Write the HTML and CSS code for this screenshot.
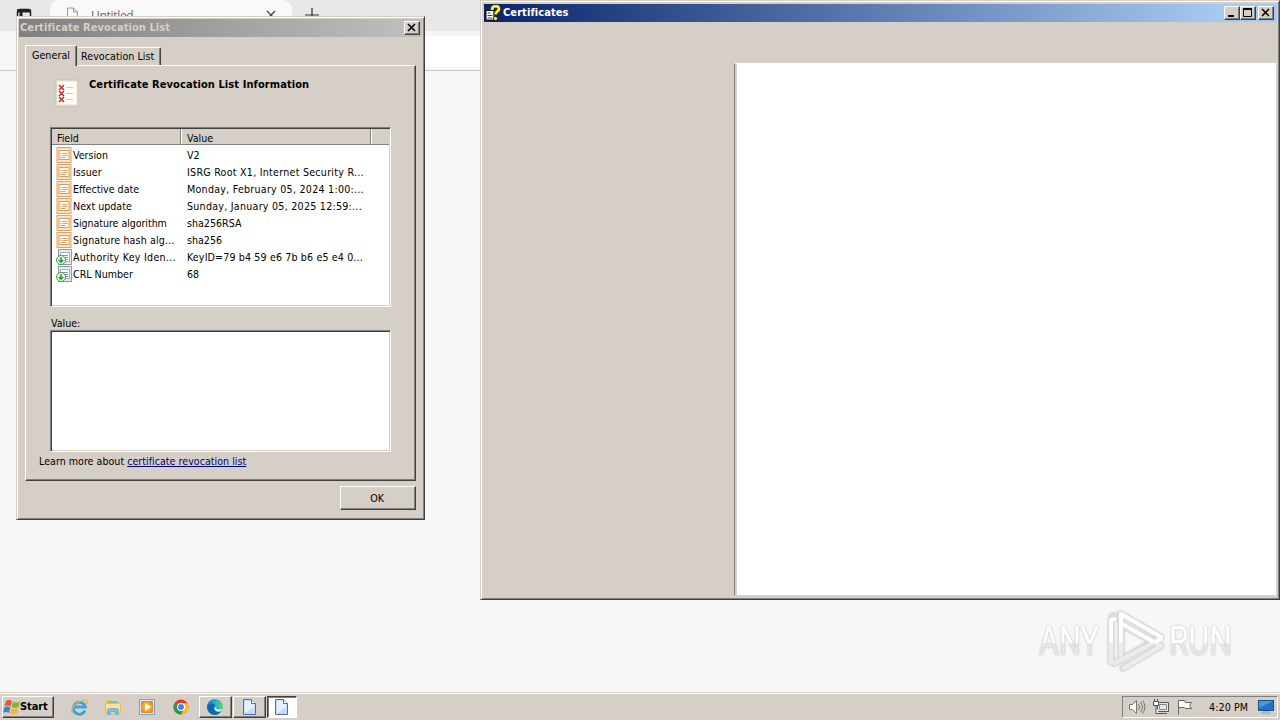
FILE: index.html
```html
<!DOCTYPE html>
<html lang="en">
<head>
<meta charset="utf-8">
<title>Desktop</title>
<link rel="stylesheet" href="styles.css">
</head>
<body>
<svg class="defs" width="0" height="0">
  <symbol id="field" viewBox="0 0 15 16"><rect x=".5" y=".5" width="14" height="15" fill="#fbe3c4" stroke="#dfa266"/><rect x="2.500" y="3.500" width="10" height="9" fill="#fffaf0" stroke="#dc9c58"/><path d="M4 6.500h1M6 6.500h5M4 8.500h1M6 8.500h5M4 10.500h5" stroke="#dda066"/></symbol>
  <symbol id="ext" viewBox="0 0 16 16"><rect x="2.500" y=".5" width="13" height="15" fill="#e4eaf0" stroke="#8a9bb0"/><rect x="4.500" y="3.500" width="9" height="9" fill="#fff" stroke="#a5b1c4"/><path d="M6 6.500h6M8 8.500h4M10 10.500h2" stroke="#8a9bb8"/><circle cx="5" cy="11" r="4.500" fill="#eaffea" stroke="#559055"/><path d="M5 8v5M2.700 11l2.300 2.300L7.300 11" fill="none" stroke="#299b29" stroke-width="1.500"/></symbol>
  <symbol id="doc" viewBox="0 0 16 16"><path d="M2.500.5h8l4 4v11h-12z" fill="#c6dafa" stroke="#53709c"/><path d="M4 2h6v3h3v3L4 14z" fill="#e6f0ff"/><path d="M10.500.5v4h4" fill="#fff" stroke="#53709c"/></symbol>
</svg>
<div class="desktop">
  <div class="browser">
    <div class="tabstrip">
      <svg class="strip-icon" width="16" height="16"><rect x="1.500" y="1.500" width="13" height="13" rx="2" fill="none" stroke="#222" stroke-width="1.500"/><path d="M1 3h14M5 3v11" stroke="#222" stroke-width="3"/></svg>
      <div class="btab">
        <svg width="14" height="16" fill="none" stroke="#999"><path d="M1.500 1h6l4 4v10h-10zM7.500 1v4h4"/></svg>
        <span class="btitle">Untitled</span>
        <svg width="10" height="10" stroke="#444" stroke-width="1.300"><path d="M1 1l8 8M9 1L1 9"/></svg>
      </div>
      <svg class="plus" width="16" height="16" stroke="#333" stroke-width="1.200"><path d="M8 1v14M1 8h14"/></svg>
    </div>
    <div class="toolbar"><div class="address"></div></div>
  </div>

  <section class="window dialog">
    <header class="titlebar inactive"><span class="t-title">Certificate Revocation List</span>
      <span class="wbtn"><svg width="12" height="10"><path d="M2 1l7 7M9 1L2 8" stroke="#000" stroke-width="1.600"/></svg></span></header>
    <nav class="tabs"><span class="tab on">General</span><span class="tab">Revocation List</span></nav>
    <div class="page">
      <div class="heading">
        <svg width="24" height="28"><rect x="1" y="1" width="22" height="26" fill="#f3ecdf" stroke="#cdbfae"/><rect x="3" y="3" width="18" height="22" fill="#fffdfa"/><path d="M4 6l5 5M9 6l-5 5M4 12l5 5M9 12l-5 5M4 18l5 5M9 18l-5 5" stroke="#d62333" stroke-width="1.500"/><path d="M11 8.500h7M11 14.500h7M11 20.500h7" stroke="#c4ccd0"/></svg>
        <b class="t-head">Certificate Revocation List Information</b>
      </div>
      <div class="list">
        <div class="lhead"><span>Field</span><span>Value</span><span></span></div>
        <div class="row"><svg><use href="#field"/></svg><span class="k">Version</span><span class="v">V2</span></div>
        <div class="row"><svg><use href="#field"/></svg><span class="k">Issuer</span><span class="v wide">ISRG Root X1, Internet Security R...</span></div>
        <div class="row"><svg><use href="#field"/></svg><span class="k">Effective date</span><span class="v wide">Monday, February 05, 2024 1:00:...</span></div>
        <div class="row"><svg><use href="#field"/></svg><span class="k">Next update</span><span class="v wide">Sunday, January 05, 2025 12:59:...</span></div>
        <div class="row"><svg><use href="#field"/></svg><span class="k snug">Signature algorithm</span><span class="v">sha256RSA</span></div>
        <div class="row"><svg><use href="#field"/></svg><span class="k semi">Signature hash alg...</span><span class="v">sha256</span></div>
        <div class="row"><svg><use href="#ext"/></svg><span class="k wide">Authority Key Iden...</span><span class="v semi">KeyID=79 b4 59 e6 7b b6 e5 e4 0...</span></div>
        <div class="row"><svg><use href="#ext"/></svg><span class="k">CRL Number</span><span class="v">68</span></div>
      </div>
      <div class="vlabel">Value:</div>
      <div class="vbox"></div>
      <div class="learn">Learn more about <a>certificate revocation list</a></div>
    </div>
    <div class="actions"><span class="ok">OK</span></div>
  </section>

  <section class="window certs">
    <header class="titlebar active">
      <svg width="16" height="16"><path d="M1 5.500h8v9.500H1z" fill="#fff" stroke="#111"/><path d="M2.500 8h3M2.500 10.500h5M2.500 13h5" stroke="#444"/><path d="M7 5c0-5 7-5 7-1 0 3-3.500 2-3.500 5.500" fill="none" stroke="#111" stroke-width="4.500"/><circle cx="10.500" cy="13.500" r="2.300" fill="#111"/><path d="M7 5c0-5 7-5 7-1 0 3-3.500 2-3.500 5.500" fill="none" stroke="#ffed20" stroke-width="3"/><circle cx="10.500" cy="13.500" r="1.700" fill="#ffed20"/></svg>
      <span class="t-certs">Certificates</span>
      <span class="wbtn"><svg width="12" height="10"><path d="M2 8h6" stroke="#000" stroke-width="2"/></svg></span>
      <span class="wbtn"><svg width="12" height="10"><path d="M1.500 1v7.500h8V1M1 1h9" stroke="#000" fill="none"/><path d="M1 1h9" stroke="#000" stroke-width="2"/></svg></span>
      <span class="wbtn gap"><svg width="12" height="10"><path d="M2 1l7 7M9 1L2 8" stroke="#000" stroke-width="1.600"/></svg></span>
    </header>
    <div class="content"></div>
  </section>

  <svg class="watermark" width="220" height="80" viewBox="0 0 220 80">
    <defs>
      <linearGradient id="wm" x1="0" y1="0" x2="0" y2="1"><stop offset=".54" stop-color="#fff"/><stop offset=".56" stop-color="#e6e6e6"/></linearGradient>
      <linearGradient id="wl" gradientUnits="userSpaceOnUse" x1="0" y1="5" x2="0" y2="68"><stop offset=".5" stop-color="#fff"/><stop offset=".54" stop-color="#ececec"/></linearGradient>
    </defs>
    <g fill="none" stroke-linejoin="round" stroke-linecap="round">
      <path id="mark" d="M86 11H82M91 50V9l40 23M81 15v42l4 1 46-26M91 19l40 22M93 63l38-22" stroke="#dcdcdc" stroke-width="6"/>
      <path d="M85 14L81 15v42l4 1 46-24M91 50V9l40 23M92 19l39 22M94 63l37-22" stroke="url(#wl)" stroke-width="4"/>
    </g>
    <g class="wmtext" fill="url(#wm)"><text x="9" y="50" textLength="60" lengthAdjust="spacingAndGlyphs">ANY</text><text x="139" y="50" textLength="63" lengthAdjust="spacingAndGlyphs">RUN</text></g>
  </svg>

  <footer class="taskbar">
    <span class="start"><svg width="18" height="18"><path d="M3 3q3-2 6 0L7.500 8.500q-3-2-6 0z" fill="#e9572b"/><path d="M10 3.500q3 2 7 0L15.500 9q-4 2-7 0z" fill="#80b742"/><path d="M1.300 9.500q3-2 6 0L6 15q-3-2-6 0z" fill="#3c83ce"/><path d="M8.300 10q3 2 7 0L14 15.500q-4 2-7 0z" fill="#f5b827"/></svg><b>Start</b></span>
    <span class="quick">
      <svg width="18" height="18"><path d="M15 12.500A6 6 0 1 1 15.300 9H5" fill="none" stroke="#35a5df" stroke-width="2.800"/><path d="M2 15C-1 11 10 1 16 2c2 1 1 3 0 4" fill="none" stroke="#e9b83d" stroke-width="1.300"/></svg>
      <svg width="18" height="18"><path d="M2 2h5l1 2h7v9H2z" fill="#e8c65c"/><path d="M4 3h10v5H4z" fill="#8cc58a"/><path d="M1.500 5.500h15V15h-15z" fill="#f8e298" stroke="#dfc060"/><path d="M3.500 16.500v-4q0-2 2-2h7q2 0 2 2v4h-3v-3h-5v3z" fill="#7cc0e4" stroke="#4f9fc8" stroke-width=".6"/></svg>
      <svg width="18" height="18"><rect x="1.500" y="1.500" width="15" height="15" fill="#d8eafc" stroke="#70a6d7"/><rect x="3" y="3" width="12" height="12" rx="1" fill="#f28b13"/><circle cx="9" cy="9" r="5" fill="#f6a83c"/><path d="M7 5l6 4-6 4z" fill="#fff"/></svg>
      <svg width="18" height="18"><circle cx="9" cy="9" r="7.500" fill="#e33b2e"/><path d="M2.500 5.200L9 9v7.500A7.500 7.500 0 0 1 2.500 5.200" fill="#279b49"/><path d="M9 16.500A7.500 7.500 0 0 0 15.500 5.300H9V9l3 2z" fill="#fbc116"/><circle cx="9" cy="9" r="4" fill="#fff"/><circle cx="9" cy="9" r="3" fill="#4285e8"/></svg>
    </span>
    <span class="task"><svg width="18" height="18"><defs><linearGradient id="edge"><stop stop-color="#1879cb"/><stop offset=".5" stop-color="#24add5"/><stop offset="1" stop-color="#5bd569"/></linearGradient></defs><circle cx="9" cy="9" r="8" fill="url(#edge)"/><path d="M1 8c4-5 9-2 8 1-2 4 2 6 6 4-4 7-14 4-14-5z" fill="#1266b4"/><path d="M9 8c0 3 3 4 7 3l-1 2c-5 2-8-2-6-5z" fill="#e7eeee"/></svg></span>
    <span class="task"><svg width="16" height="16"><use href="#doc"/></svg></span>
    <span class="task pressed"><svg width="16" height="16"><use href="#doc"/></svg></span>
    <span class="tray">
      <svg width="18" height="16" fill="#fff" stroke="#777"><path d="M1.500 5.500h3l4-4v13l-4-4h-3z"/><path d="M10.500 5q2 3 0 6M12.500 3q4 5 0 10M14.500 1.500q5 6.500 0 13" fill="none"/></svg>
      <svg width="18" height="16" fill="#e8e8e8" stroke="#555"><path d="M5.500 3.500h11v9h-11z"/><path d="M7.500 5.500h7v5h-7z" stroke="#888"/><path d="M7 14.500h8"/><path d="M1.500 2.500h5v4h-5zM2.500 0v2M5.500 0v2M4 7v7.500h3" fill="#fff"/></svg>
      <svg width="18" height="16" fill="#fff" stroke="#666"><path d="M2.500 15.500V1.500h6l1 2h6l-2 3 2 3h-6l-1-1h-5.500"/></svg>
      <span class="clock">4:20 PM</span>
      <svg width="16" height="14"><rect x=".5" y=".5" width="15" height="10" fill="#2472c6" stroke="#174f90"/><path d="M1 1h14L1 8z" fill="#4a98df"/><path d="M5 11h6v1h2v2H3v-2h2z" fill="#9dbad1"/></svg>
    </span>
  </footer>
</div>
</body>
</html>
```
FILE: styles.css
```css
* { box-sizing: border-box; }
body { margin: 0; font: 10.6px/17px "DejaVu Sans Condensed", "DejaVu Sans", sans-serif; font-stretch: condensed; color: #000; }
svg { flex: none; display: block; }
.defs { position: absolute; }
.desktop { position: relative; width: 1280px; height: 720px; background: #f7f7f7; overflow: hidden; display: flex; flex-direction: column; white-space: nowrap; }
.browser { flex: 1; }
.tabstrip { height: 31px; background: #e8e8e8; display: flex; }
.strip-icon { margin: 8px 17px 0 16px; }
.btab { width: 242px; background: #f9f9f9; border-radius: 9px 9px 0 0; display: flex; align-items: flex-start; padding: 7px 16px 0; margin-left: 1px; }
.btitle { flex: 1; margin-left: 11px; font: 12px/17px "Open Sans", sans-serif; color: #666; letter-spacing: -.3px; }
.btab svg:last-child { margin-top: 3px; }
.plus { margin: 7px 0 0 12px; }
.toolbar { height: 40px; background: #f6f6f6; border-bottom: 1px solid #c8c8c8; padding: 5px 0 3px 100px; }
.address { height: 31px; background: #fff; }

.window { position: absolute; background: #d6cfc7; border: 1px solid; border-color: #d6cfc7 #404040 #404040 #d6cfc7; box-shadow: inset 1px 1px #fff, inset -1px -1px #808080; display: flex; flex-direction: column; }
.dialog { left: 16px; top: 16px; width: 409px; height: 504px; padding: 2px; }
.certs { left: 480px; top: 0; width: 800px; height: 600px; padding: 3px 2px 3px 3px; }
.titlebar { height: 18px; flex: none; display: flex; align-items: center; font-weight: bold; line-height: 18px; }
.titlebar > span:not(.wbtn) { flex: 1; }
.inactive { background: linear-gradient(90deg, #808080, #c0c0c0); color: #d6cfc7; padding: 0 2px 0 1px; }
.active { background: linear-gradient(90deg, #0a246a, #a6caf0 93%); color: #fff; padding: 0 3px 0 1px; }
.active > svg { margin-right: 2px; }
.wbtn, .ok, .start, .task { background: #d6cfc7; border: 1px solid; border-color: #fff #404040 #404040 #fff; box-shadow: inset -1px -1px #808080; }
.wbtn { width: 16px; height: 14px; display: flex; padding: 1px; }
.gap { margin-left: 2px; }
.t-title, .t-certs, .t-head { font-size: 11px; letter-spacing: .08px; }
.wide { letter-spacing: .26px; }
.semi { letter-spacing: .14px; }
.snug { letter-spacing: -.06px; }

.tabs { height: 28px; flex: none; display: flex; align-items: flex-end; padding-left: 6px; }
.tab { height: 18px; border: 1px solid; border-color: #fff #404040 transparent #fff; border-bottom: 0; border-radius: 2px 2px 0 0; box-shadow: inset -1px 0 #808080; padding-left: 4px; width: 84px; border-left: 0; line-height: 17px; letter-spacing: .06px; }
.tab.on { height: 21px; margin-bottom: -1px; width: 52px; padding-left: 6px; border-left: 1px solid #fff; background: #d6cfc7; z-index: 1; line-height: 18px; }
.page { height: 416px; margin: 0 6px; border: 1px solid; border-color: #fff #404040 #404040 #fff; box-shadow: inset -1px -1px #808080; }
.heading { height: 61px; display: flex; padding: 13px 0 0 28px; }
.heading svg { margin-left: 1px; }
.t-head { margin: -3px 0 0 10px; }
.list { width: 341px; height: 180px; margin-left: 24px; background: #fff; border: 1px solid; border-color: #808080 #fff #fff #808080; box-shadow: inset 1px 1px #404040, inset -1px -1px #d6cfc7; padding: 1px; }
.lhead { height: 16px; background: #d6cfc7; border-bottom: 1px solid #808080; display: flex; line-height: 18px; margin-bottom: 2px; }
.lhead span { padding-left: 5px; border-right: 1px solid #808080; box-shadow: 1px 0 #fff; }
.lhead span:nth-child(1) { width: 129px; }
.lhead span:nth-child(2) { width: 190px; padding-left: 6px; }
.lhead span:nth-child(3) { border: 0; box-shadow: none; }
.row { display: flex; height: 17px; }
.row svg { width: 16px; height: 16px; margin-left: 4px; }
.k { width: 115px; padding-left: 1px; }
.vlabel { margin: 8px 0 0 25px; height: 15px; line-height: 17px; }
.vbox { width: 341px; height: 122px; margin-left: 24px; background: #fff; border: 1px solid; border-color: #808080 #fff #fff #808080; box-shadow: inset 1px 1px #404040, inset -1px -1px #d6cfc7; }
.learn { padding-left: 13px; margin-top: 1px; letter-spacing: .02px; }
.learn a { color: #00007c; text-decoration: underline; }
.actions { display: flex; justify-content: flex-end; padding: 5px 6px 0; }
.ok { width: 76px; height: 24px; text-align: center; line-height: 22px; padding-right: 2px; }

.content { flex: 1; margin: 41px 0 0 250px; background: #fff; border: 1px solid; border-color: #fff #d6cfc7 #d6cfc7 #808080; box-shadow: inset 2px 0 #d6cfc7; }
.watermark { position: absolute; left: 1030px; top: 605px; filter: drop-shadow(0 0 1px #bbb); }
.wmtext { font: 41px "Roboto", sans-serif; }

.taskbar { height: 28px; background: #d6cfc7; border-top: 1px solid #d6cfc7; box-shadow: inset 0 1px #fff; padding: 3px 2px 1px; display: flex; }
.start { width: 52px; height: 22px; display: flex; align-items: center; font-size: 11px; line-height: 16px; }
.start b { letter-spacing: -.1px; }
.start svg { margin-right: -1px; }
.quick { display: flex; align-items: center; gap: 16px; margin: 0 9px 2px 16px; }
.task { width: 33px; height: 22px; margin-right: 1px; display: flex; align-items: center; justify-content: center; padding-right: 2px; }
.task.pressed { width: 30px; background: #fff; border-color: #404040 #fff #fff #404040; box-shadow: inset 1px 1px #808080; }
.tray { margin-left: auto; width: 156px; height: 22px; border: 1px solid; border-color: #808080 #fff #fff #808080; display: flex; align-items: center; padding-left: 5px; gap: 6px; }
.clock { margin: 0 4px 0 9px; letter-spacing: .1px; }
```
